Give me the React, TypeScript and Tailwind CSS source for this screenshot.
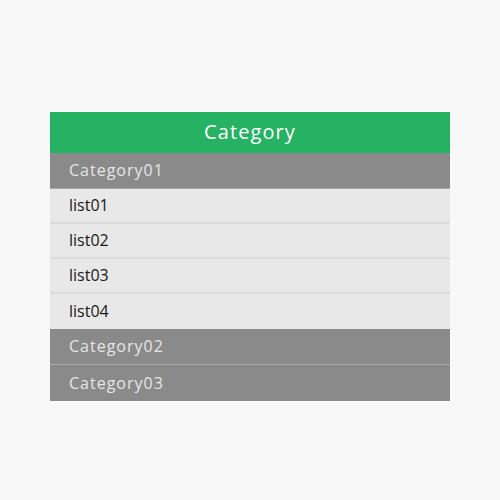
export default function App() {
  const groups = [
    { name: "Category01", items: ["list01", "list02", "list03", "list04"] },
    { name: "Category02", items: [] as string[] },
    { name: "Category03", items: [] as string[] },
  ];

  return (
    <div className="min-h-[500px] w-[500px] bg-[#f8f8f8] pt-[112px] font-['Open_Sans',sans-serif]">
      <div className="mx-auto w-[400px]">
        <div className="flex h-[41px] items-center justify-center bg-[#26b263] pb-[2px] text-[20px] tracking-[1.1px] text-white">
          Category
        </div>
        {groups.map((g, gi) => (
          <div key={g.name}>
            <div
              className={
                "flex h-[36px] items-center bg-[#8a8a8a] pb-[1px] pl-[19px] text-[16px] tracking-[1px] text-[#e6e6e6] " +
                (gi < groups.length - 1 ? "border-b border-[#a8a8a8]" : "")
              }
            >
              {g.name}
            </div>
            {g.items.map((it, i) => (
              <div
                key={it}
                className={
                  "flex h-[35px] items-center bg-[#e8e8e8] pb-[2px] pl-[19px] text-[16px] text-[#1a1a1a] " +
                  (i < g.items.length - 1 ? "border-b-2 border-[#dcdcdc]" : "")
                }
              >
                {it}
              </div>
            ))}
          </div>
        ))}
      </div>
    </div>
  );
}
